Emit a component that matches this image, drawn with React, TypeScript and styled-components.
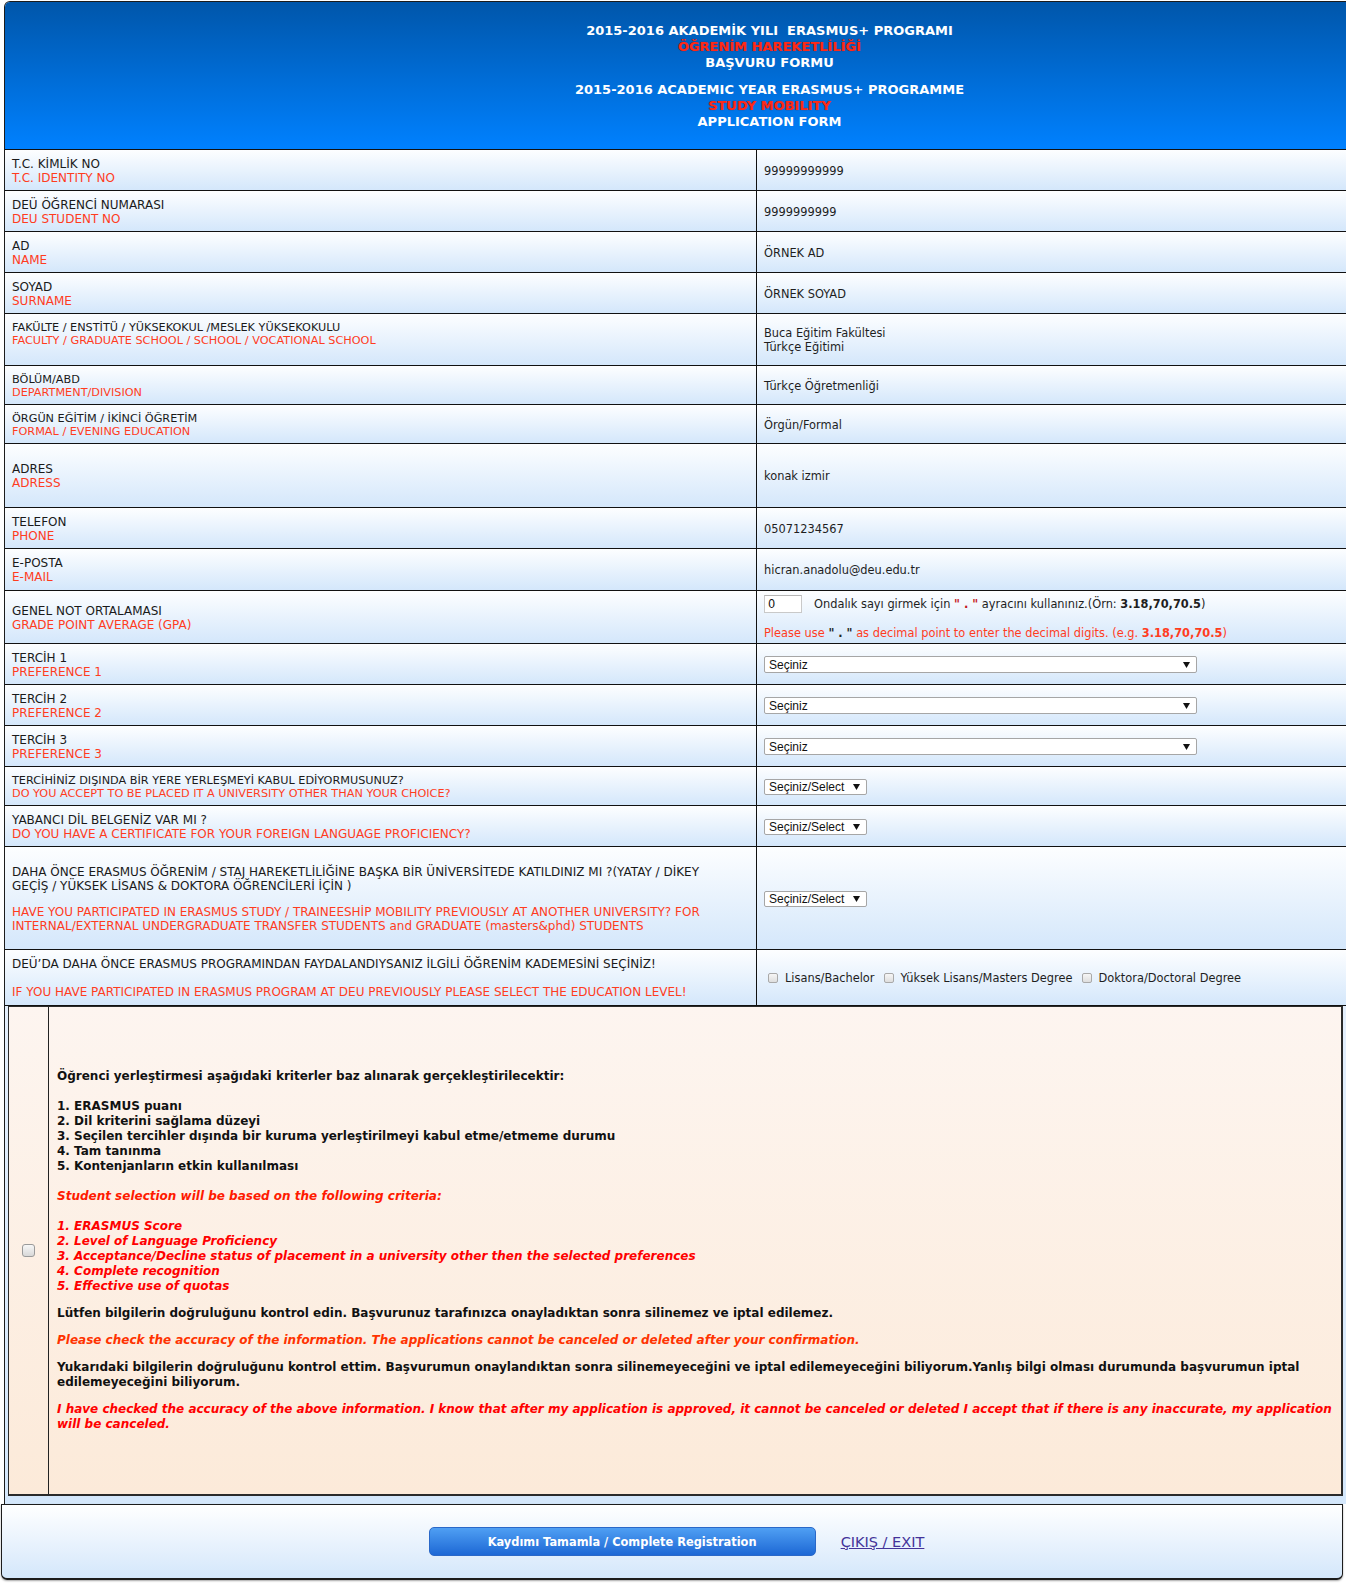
import React from "react";
import styled, { createGlobalStyle } from "styled-components";

const GlobalStyle = createGlobalStyle`
  html, body { margin: 0; padding: 0; background: #fff; }
  body { font-family: "DejaVu Sans", Verdana, sans-serif; overflow: hidden; }
  * { box-sizing: border-box; }
`;

const Page = styled.div`
  width: 1346px;
  height: 1583px;
  overflow: hidden;
`;

const Frame = styled.div`
  margin: 1px 0 0 4px;
  width: 1531px;
  border: 1px solid #1c1c1c;
  border-bottom: none;
  border-radius: 6px 6px 0 0;
  overflow: hidden;
`;

const Header = styled.header`
  height: 147px;
  padding-top: 21px;
  background: linear-gradient(#0056aa, #0081ff);
  text-align: center;
  font: bold 13px/16px "DejaVu Sans", Verdana, sans-serif;
  color: #fff;
`;

const HeaderLine = styled.div<{ $red?: boolean; $gap?: boolean }>`
  color: ${(p) => (p.$red ? "#ff2a1a" : "#ffffff")};
  margin-top: ${(p) => (p.$gap ? "11px" : "0")};
  text-shadow: ${(p) => (p.$red ? "0 0 1px #7a0000" : "none")};
`;

const Row = styled.div<{ $h: number }>`
  display: grid;
  grid-template-columns: 752px 1fr;
  height: ${(p) => p.$h}px;
  border-top: 1px solid #111;
  background: linear-gradient(#fdfeff, #d4e7fb);
`;

const LabelCell = styled.div<{ $small?: boolean }>`
  display: flex;
  flex-direction: column;
  justify-content: center;
  padding: 1px 7px 0;
  border-right: 1px solid #111;
  font-size: ${(p) => (p.$small ? 11.25 : 12)}px;
  line-height: ${(p) => (p.$small ? 13 : 14)}px;
  color: #1a1a1a;
`;

const Tr = styled.span<{ $gapTop?: number }>`
  display: block;
  margin-top: ${(p) => p.$gapTop || 0}px;
  white-space: nowrap;
`;

const En = styled.span<{ $gapTop?: number }>`
  display: block;
  color: #ff3c1e;
  margin-top: ${(p) => p.$gapTop || 0}px;
  white-space: nowrap;
`;

const ValueCell = styled.div`
  display: flex;
  flex-direction: column;
  justify-content: center;
  align-items: flex-start;
  padding: 1px 7px 0;
  font-size: 11.4px;
  line-height: 14px;
  color: #1e1e1e;
`;

const GpaLine = styled.div`
  display: flex;
  align-items: center;
  gap: 12px;
  white-space: nowrap;
`;

const GpaInput = styled.input`
  width: 38px;
  height: 18px;
  border: 1px solid #c9c9c9;
  border-top-color: #b5b5b5;
  padding: 0 3px;
  font: 11.4px "DejaVu Sans", Verdana, sans-serif;
  color: #111;
  background: #fff;
`;

const Note = styled.div<{ $red?: boolean }>`
  color: ${(p) => (p.$red ? "#ff3c1e" : "#1e1e1e")};
  margin-top: ${(p) => (p.$red ? "13px" : "0")};
  white-space: nowrap;
`;

const Strong = styled.b<{ $color?: string }>`
  color: ${(p) => p.$color || "inherit"};
`;

const Select = styled.div<{ $w: number; $h: number }>`
  display: flex;
  align-items: center;
  justify-content: space-between;
  width: ${(p) => p.$w}px;
  height: ${(p) => p.$h}px;
  border: 1px solid #a6a6a6;
  border-radius: 2px;
  background: #fff;
  padding: 0 6px 0 4px;
  font: 12px "Liberation Sans", Arial, sans-serif;
  color: #111;
`;

const Options = styled.div`
  display: flex;
  align-items: center;
  white-space: nowrap;
`;

const Option = styled.label`
  display: inline-flex;
  align-items: center;
  margin-right: 5px;
`;

const SmallCheck = styled.input`
  appearance: none;
  margin: 0 7px 0 4px;
  width: 10px;
  height: 10px;
  border: 1px solid #a9a9a9;
  border-radius: 2px;
  background: linear-gradient(#f6f6f6, #dedede);
`;

const ConfirmRow = styled.div`
  border-top: 1px solid #111;
  padding: 0 0 8px 3px;
  background: linear-gradient(#e4effc, #d4e7fb);
`;

const ConfirmBox = styled.div`
  display: grid;
  grid-template-columns: 40px 1fr;
  width: 1335px;
  height: 490px;
  border: 1px solid #2a2a2a;
  border-right-width: 2px;
  border-bottom-width: 2px;
  background: linear-gradient(#fdf5f0, #fcead9);
`;

const CheckCell = styled.div`
  display: flex;
  align-items: center;
  justify-content: center;
  border-right: 1px solid #222;
`;

const BigCheck = styled.input`
  appearance: none;
  margin: 0;
  width: 13px;
  height: 13px;
  border: 1px solid #9a9a9a;
  border-radius: 3px;
  background: linear-gradient(#f7f7f7, #d8d8d8);
`;

const ConfirmText = styled.div`
  display: flex;
  flex-direction: column;
  justify-content: center;
  padding-left: 8px;
  font: bold 12px/15px "DejaVu Sans", Verdana, sans-serif;
  color: #111;
  white-space: nowrap;
`;

const Para = styled.p<{ $red?: string }>`
  margin: 12px 0 0;
  color: ${(p) => p.$red || "#111"};
  font-style: ${(p) => (p.$red ? "italic" : "normal")};
  &:first-child { margin-top: 0; }
`;

const Footer = styled.footer`
  display: flex;
  align-items: center;
  justify-content: center;
  gap: 25px;
  margin-left: 1px;
  width: 1342px;
  height: 76px;
  padding-left: 9px;
  border: 1px solid #1c1c1c;
  border-bottom-width: 2px;
  border-radius: 0 0 6px 6px;
  box-shadow: 0 1px 2px rgba(0, 0, 0, 0.35);
  background: linear-gradient(#ffffff, #d4e7fb);
`;

const SubmitButton = styled.button`
  width: 387px;
  height: 29px;
  border: 1px solid #2a68c8;
  border-radius: 5px;
  background: linear-gradient(#4f9ff3, #1d68d5);
  color: #fff;
  font: bold 11.4px "DejaVu Sans", Verdana, sans-serif;
  cursor: pointer;
`;

const ExitLink = styled.a`
  color: #443399;
  font: 14.5px "DejaVu Sans", Verdana, sans-serif;
  text-decoration: underline;
`;

function Arrow() {
  return (
    <svg width="7" height="7" viewBox="0 0 7 7">
      <path d="M0 1h7L3.5 7z" fill="#111" />
    </svg>
  );
}

type Simple = { tr: string; en: string; value: React.ReactNode; h: number; small?: boolean; trail?: boolean };

const simpleRows: Simple[] = [
  { tr: "T.C. KİMLİK NO", en: "T.C. IDENTITY NO", value: "99999999999", h: 41 },
  { tr: "DEÜ ÖĞRENCİ NUMARASI", en: "DEU STUDENT NO", value: "9999999999", h: 41 },
  { tr: "AD", en: "NAME", value: "ÖRNEK AD", h: 41 },
  { tr: "SOYAD", en: "SURNAME", value: "ÖRNEK SOYAD", h: 41 },
  {
    tr: "FAKÜLTE / ENSTİTÜ / YÜKSEKOKUL /MESLEK YÜKSEKOKULU",
    en: "FACULTY / GRADUATE SCHOOL / SCHOOL / VOCATIONAL SCHOOL",
    value: (
      <>
        <span>Buca Eğitim Fakültesi</span>
        <span>Türkçe Eğitimi</span>
      </>
    ),
    h: 52,
    small: true,
    trail: true,
  },
  { tr: "BÖLÜM/ABD", en: "DEPARTMENT/DIVISION", value: "Türkçe Öğretmenliği", h: 39, small: true },
  { tr: "ÖRGÜN EĞİTİM / İKİNCİ ÖĞRETİM", en: "FORMAL / EVENING EDUCATION", value: "Örgün/Formal", h: 39, small: true },
  { tr: "ADRES", en: "ADRESS", value: "konak izmir", h: 64 },
  { tr: "TELEFON", en: "PHONE", value: "05071234567", h: 41 },
  { tr: "E-POSTA", en: "E-MAIL", value: "hicran.anadolu@deu.edu.tr", h: 42 },
];

const prefRows = [1, 2, 3];

export default function App() {
  return (
    <Page>
      <GlobalStyle />
      <Frame>
        <Header>
          <HeaderLine>2015-2016 AKADEMİK YILI&nbsp; ERASMUS+ PROGRAMI</HeaderLine>
          <HeaderLine $red>ÖĞRENİM HAREKETLİLİĞİ</HeaderLine>
          <HeaderLine>BAŞVURU FORMU</HeaderLine>
          <HeaderLine $gap>2015-2016 ACADEMIC YEAR ERASMUS+ PROGRAMME</HeaderLine>
          <HeaderLine $red>STUDY MOBILITY</HeaderLine>
          <HeaderLine>APPLICATION FORM</HeaderLine>
        </Header>

        {simpleRows.map((r) => (
          <Row key={r.tr} $h={r.h}>
            <LabelCell $small={r.small}>
              <Tr>{r.tr}</Tr>
              <En>{r.en}</En>
              {r.trail && <Tr>&nbsp;</Tr>}
            </LabelCell>
            <ValueCell>{r.value}</ValueCell>
          </Row>
        ))}

        <Row $h={53}>
          <LabelCell>
            <Tr>GENEL NOT ORTALAMASI</Tr>
            <En>GRADE POINT AVERAGE (GPA)</En>
          </LabelCell>
          <ValueCell>
            <GpaLine>
              <GpaInput defaultValue="0" />
              <Note>
                Ondalık sayı girmek için <Strong $color="#c4161c">" . "</Strong> ayracını kullanınız.(Örn:{" "}
                <Strong>3.18,70,70.5</Strong>)
              </Note>
            </GpaLine>
            <Note $red>
              Please use <Strong $color="#222">" . "</Strong> as decimal point to enter the decimal digits. (e.g.{" "}
              <Strong>3.18,70,70.5</Strong>)
            </Note>
          </ValueCell>
        </Row>

        {prefRows.map((n) => (
          <Row key={n} $h={41}>
            <LabelCell>
              <Tr>TERCİH {n}</Tr>
              <En>PREFERENCE {n}</En>
            </LabelCell>
            <ValueCell>
              <Select $w={433} $h={17}>
                <span>Seçiniz</span>
                <Arrow />
              </Select>
            </ValueCell>
          </Row>
        ))}

        <Row $h={39}>
          <LabelCell $small>
            <Tr>TERCİHİNİZ DIŞINDA BİR YERE YERLEŞMEYİ KABUL EDİYORMUSUNUZ?</Tr>
            <En>DO YOU ACCEPT TO BE PLACED IT A UNIVERSITY OTHER THAN YOUR CHOICE?</En>
          </LabelCell>
          <ValueCell>
            <Select $w={103} $h={16}>
              <span>Seçiniz/Select</span>
              <Arrow />
            </Select>
          </ValueCell>
        </Row>

        <Row $h={41}>
          <LabelCell>
            <Tr>YABANCI DİL BELGENİZ VAR MI ?</Tr>
            <En>DO YOU HAVE A CERTIFICATE FOR YOUR FOREIGN LANGUAGE PROFICIENCY?</En>
          </LabelCell>
          <ValueCell>
            <Select $w={103} $h={16}>
              <span>Seçiniz/Select</span>
              <Arrow />
            </Select>
          </ValueCell>
        </Row>

        <Row $h={103}>
          <LabelCell>
            <Tr>
              DAHA ÖNCE ERASMUS ÖĞRENİM / STAJ HAREKETLİLİĞİNE BAŞKA BİR ÜNİVERSİTEDE KATILDINIZ MI ?(YATAY / DİKEY
            </Tr>
            <Tr>GEÇİŞ / YÜKSEK LİSANS &amp; DOKTORA ÖĞRENCİLERİ İÇİN )</Tr>
            <En $gapTop={12}>
              HAVE YOU PARTICIPATED IN ERASMUS STUDY / TRAINEESHİP MOBILITY PREVIOUSLY AT ANOTHER UNIVERSITY? FOR
            </En>
            <En>INTERNAL/EXTERNAL UNDERGRADUATE TRANSFER STUDENTS and GRADUATE (masters&amp;phd) STUDENTS</En>
          </LabelCell>
          <ValueCell>
            <Select $w={103} $h={16}>
              <span>Seçiniz/Select</span>
              <Arrow />
            </Select>
          </ValueCell>
        </Row>

        <Row $h={56}>
          <LabelCell>
            <Tr>DEÜ’DA DAHA ÖNCE ERASMUS PROGRAMINDAN FAYDALANDIYSANIZ İLGİLİ ÖĞRENİM KADEMESİNİ SEÇİNİZ!</Tr>
            <En $gapTop={14}>
              IF YOU HAVE PARTICIPATED IN ERASMUS PROGRAM AT DEU PREVIOUSLY PLEASE SELECT THE EDUCATION LEVEL!
            </En>
          </LabelCell>
          <ValueCell>
            <Options>
              <Option>
                <SmallCheck type="checkbox" />
                Lisans/Bachelor
              </Option>
              <Option>
                <SmallCheck type="checkbox" />
                Yüksek Lisans/Masters Degree
              </Option>
              <Option>
                <SmallCheck type="checkbox" />
                Doktora/Doctoral Degree
              </Option>
            </Options>
          </ValueCell>
        </Row>

        <ConfirmRow>
          <ConfirmBox>
            <CheckCell>
              <BigCheck type="checkbox" />
            </CheckCell>
            <ConfirmText>
              <Para>
                Öğrenci yerleştirmesi aşağıdaki kriterler baz alınarak gerçekleştirilecektir:
                <br />
                <br />
                1. ERASMUS puanı
                <br />
                2. Dil kriterini sağlama düzeyi
                <br />
                3. Seçilen tercihler dışında bir kuruma yerleştirilmeyi kabul etme/etmeme durumu
                <br />
                4. Tam tanınma
                <br />
                5. Kontenjanların etkin kullanılması
                <br />
                <br />
                <Strong $color="#ff1a00">
                  <i>Student selection will be based on the following criteria:</i>
                </Strong>
                <br />
                <br />
                <Strong $color="#ff0000">
                  <i>
                    1. ERASMUS Score
                    <br />
                    2. Level of Language Proficiency
                    <br />
                    3. Acceptance/Decline status of placement in a university other then the selected preferences
                    <br />
                    4. Complete recognition
                    <br />
                    5. Effective use of quotas
                  </i>
                </Strong>
              </Para>
              <Para>
                Lütfen bilgilerin doğruluğunu kontrol edin. Başvurunuz tarafınızca onayladıktan sonra silinemez ve iptal
                edilemez.
              </Para>
              <Para $red="#ff3300">
                Please check the accuracy of the information. The applications cannot be canceled or deleted after your
                confirmation.
              </Para>
              <Para>
                Yukarıdaki bilgilerin doğruluğunu kontrol ettim. Başvurumun onaylandıktan sonra silinemeyeceğini ve iptal
                edilemeyeceğini biliyorum.Yanlış bilgi olması durumunda başvurumun iptal
                <br />
                edilemeyeceğini biliyorum.
              </Para>
              <Para $red="#ff0000">
                I have checked the accuracy of the above information. I know that after my application is approved, it
                cannot be canceled or deleted I accept that if there is any inaccurate, my application
                <br />
                will be canceled.
              </Para>
            </ConfirmText>
          </ConfirmBox>
        </ConfirmRow>
      </Frame>

      <Footer>
        <SubmitButton type="button">Kaydımı Tamamla / Complete Registration</SubmitButton>
        <ExitLink href="#">ÇIKIŞ / EXIT</ExitLink>
      </Footer>
    </Page>
  );
}
